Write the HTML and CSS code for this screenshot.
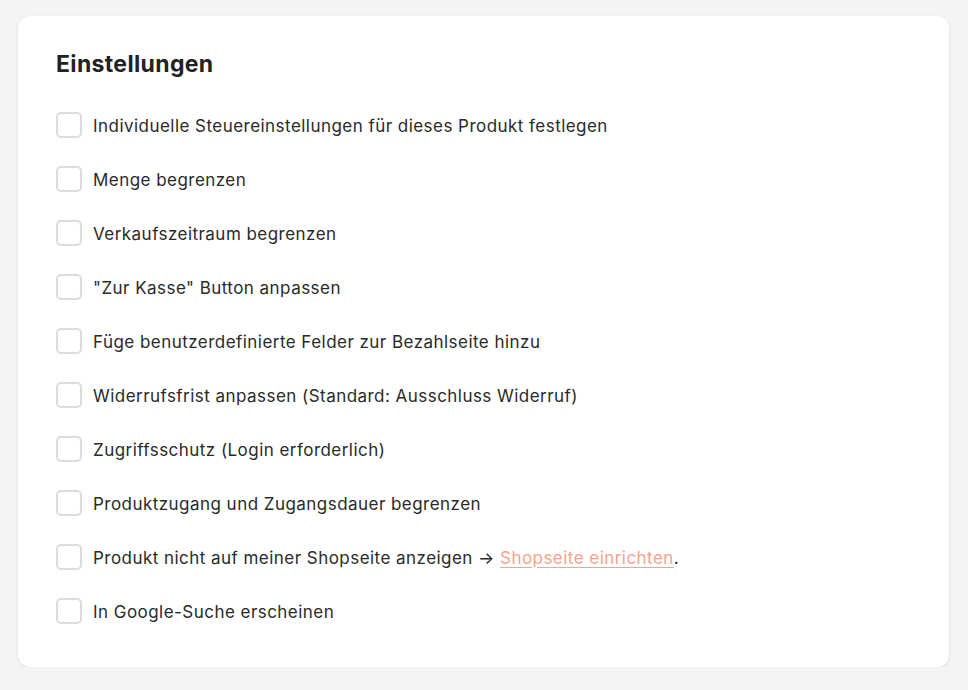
FILE: index.html
```html
<!DOCTYPE html>
<html lang="de">
<head>
<meta charset="utf-8">
<link rel="stylesheet" href="styles.css">
</head>
<body>
<section class="card">
  <h2 class="title">Einstellungen</h2>
  <ul class="options">
    <li class="option"><span class="box"></span><span class="label">Individuelle Steuereinstellungen für dieses Produkt festlegen</span></li>
    <li class="option"><span class="box"></span><span class="label">Menge begrenzen</span></li>
    <li class="option"><span class="box"></span><span class="label">Verkaufszeitraum begrenzen</span></li>
    <li class="option"><span class="box"></span><span class="label">"Zur Kasse" Button anpassen</span></li>
    <li class="option"><span class="box"></span><span class="label">Füge benutzerdefinierte Felder zur Bezahlseite hinzu</span></li>
    <li class="option"><span class="box"></span><span class="label">Widerrufsfrist anpassen (Standard: Ausschluss Widerruf)</span></li>
    <li class="option"><span class="box"></span><span class="label">Zugriffsschutz (Login erforderlich)</span></li>
    <li class="option"><span class="box"></span><span class="label">Produktzugang und Zugangsdauer begrenzen</span></li>
    <li class="option"><span class="box"></span><span class="label">Produkt nicht auf meiner Shopseite anzeigen → <a class="link" href="#">Shopseite einrichten</a>.</span></li>
    <li class="option"><span class="box"></span><span class="label">In Google-Suche erscheinen</span></li>
  </ul>
</section>
</body>
</html>
```

FILE: styles.css
```css
html, body {
  margin: 0;
  padding: 0;
  background: #f4f4f4;
  font-family: Inter, "Noto Sans", sans-serif;
  color: #222;
}
body {
  padding: 16px 19px 0 18px;
}
.card {
  background: #fff;
  border-radius: 12px;
  box-shadow: 0 1px 3px rgba(0,0,0,0.12);
  padding: 34px 38px 43px;
}
.title {
  margin: 0 0 34px;
  font-size: 23px;
  line-height: 28px;
  font-weight: 700;
  letter-spacing: 0.35px;
  color: #222;
}
.options {
  list-style: none;
  margin: 0;
  padding: 0;
  display: flex;
  flex-direction: column;
  gap: 28px;
}
.option {
  display: flex;
  align-items: center;
  gap: 11px;
  height: 26px;
}
.box {
  width: 26px;
  height: 26px;
  box-sizing: border-box;
  border: 2px solid #dcdcdc;
  border-radius: 5px;
  flex: none;
}
.label {
  font-size: 17px;
  line-height: 24px;
  letter-spacing: 0.46px;
  color: #2a2a2a;
  padding-top: 1px;
}
.link {
  color: #f3a48e;
  text-decoration: underline;
  text-underline-offset: 3px;
}
```
